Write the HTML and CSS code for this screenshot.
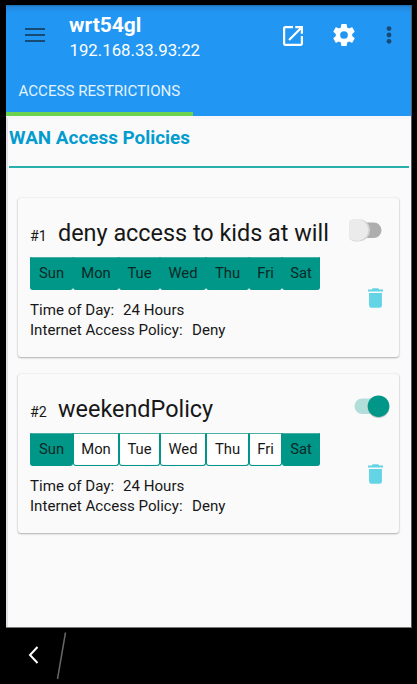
FILE: index.html
```html
<!DOCTYPE html>
<html lang="en">
<head>
<meta charset="utf-8">
<title>WAN Access Policies</title>
<link rel="stylesheet" href="styles.css">
</head>
<body>
<div class="screen">
  <header class="header">
    <div class="toolbar">
      <svg class="menu" viewBox="0 0 20 15"><path d="M0 1h20M0 7h20M0 13h20" stroke="#174a75" stroke-width="2"/></svg>
      <div class="titles">
        <h1 class="title">wrt54gl</h1>
        <div class="address">192.168.33.93:22</div>
      </div>
      <svg class="open" viewBox="3 3 18 18"><path fill="#fff" d="M19 19H5V5h7V3H5c-1.100 0-2 .9-2 2v14c0 1.100.9 2 2 2h14c1.100 0 2-.9 2-2v-7h-2v7zM14 3v2h3.590l-9.830 9.830 1.410 1.410L19 6.410V10h2V3h-7z"/></svg>
      <svg class="gear" viewBox="2 2 20 20"><path fill="#fff" d="M19.43 12.98c.04-.32.07-.64.07-.98s-.03-.66-.07-.98l2.110-1.650c.19-.15.24-.42.12-.64l-2-3.460c-.12-.22-.39-.3-.61-.22l-2.490 1c-.52-.4-1.080-.73-1.690-.98l-.38-2.650A.49.49 0 0 0 14 2h-4c-.25 0-.46.18-.49.42l-.38 2.650c-.61.25-1.170.59-1.690.98l-2.490-1c-.23-.09-.49 0-.61.22l-2 3.460c-.13.22-.07.49.12.64l2.110 1.650c-.04.32-.07.65-.07.98s.03.66.07.98l-2.110 1.650c-.19.15-.24.42-.12.64l2 3.460c.12.22.39.3.61.22l2.490-1c.52.4 1.080.73 1.690.98l.38 2.650c.03.24.24.42.49.42h4c.25 0 .46-.18.49-.42l.38-2.650c.61-.25 1.170-.59 1.690-.98l2.490 1c.23.09.49 0 .61-.22l2-3.460c.12-.22.07-.49-.12-.64l-2.110-1.650zM12 15.500a3.500 3.500 0 1 1 0-7 3.500 3.500 0 0 1 0 7z"/></svg>
      <svg class="more" viewBox="0 0 6 18"><g fill="#174a75"><circle cx="3" cy="2.600" r="2.400"/><circle cx="3" cy="9" r="2.400"/><circle cx="3" cy="15.300" r="2.400"/></g></svg>
    </div>
    <div class="tab">ACCESS RESTRICTIONS</div>
  </header>
  <main class="content">
    <h2 class="heading">WAN Access Policies</h2>
    <section class="card">
      <div class="top">
        <span class="num">#1</span><span class="name">deny access to kids at will</span>
        <svg class="switch" viewBox="0 0 40 28"><rect x="8" y="6.500" width="25.500" height="15.500" rx="7.750" fill="#aeaeae"/><path d="M1.500 5C5 3 9 2.500 11 3.300a11 11 0 0 1 0 22C9 26 5 25.500 1.500 23z" fill="#d4d4d4"/><path d="M1.500 5C5 3 9 2.500 11 3.300a10.800 10.800 0 0 1 0 21.400C9 25 5 24.500 1.500 23z" fill="#ebebeb"/></svg>
      </div>
      <div class="days"><span class="day on">Sun</span><span class="day on">Mon</span><span class="day on">Tue</span><span class="day on">Wed</span><span class="day on">Thu</span><span class="day on">Fri</span><span class="day on">Sat</span></div>
      <div class="bottom">
        <div class="details"><p><span class="time">Time of Day:</span><span class="hours">24 Hours</span></p><p><span class="policy">Internet Access Policy:</span><span class="deny">Deny</span></p></div>
        <svg class="trash" viewBox="5 3 14 18"><path fill="#62d4e5" d="M6 19c0 1.100.9 2 2 2h8c1.100 0 2-.9 2-2V7.400H6V19zM19 4h-3.500l-1-1h-5l-1 1H5v2h14V4z"/></svg>
      </div>
    </section>
    <section class="card">
      <div class="top">
        <span class="num">#2</span><span class="name">weekendPolicy</span>
        <svg class="switch" viewBox="0 0 40 28"><rect x="6.500" y="6.500" width="28" height="15.500" rx="7.750" fill="#b1ded9"/><circle cx="30.500" cy="15" r="11" fill="#bcc7c5"/><circle cx="30.500" cy="14.200" r="10.800" fill="#009688"/></svg>
      </div>
      <div class="days"><span class="day on">Sun</span><span class="day">Mon</span><span class="day">Tue</span><span class="day">Wed</span><span class="day">Thu</span><span class="day">Fri</span><span class="day on">Sat</span></div>
      <div class="bottom">
        <div class="details"><p><span class="time">Time of Day:</span><span class="hours">24 Hours</span></p><p><span class="policy">Internet Access Policy:</span><span class="deny">Deny</span></p></div>
        <svg class="trash" viewBox="5 3 14 18"><path fill="#62d4e5" d="M6 19c0 1.100.9 2 2 2h8c1.100 0 2-.9 2-2V7.400H6V19zM19 4h-3.500l-1-1h-5l-1 1H5v2h14V4z"/></svg>
      </div>
    </section>
  </main>
</div>
<nav class="nav">
  <svg class="back" viewBox="0 0 10 18"><path d="M9.500 1L2 9 9.500 17" fill="none" stroke="#fff" stroke-width="2"/></svg>
  <svg class="slash" viewBox="0 0 11 48"><path d="M9.500.5L1.500 47" stroke="#666" stroke-width="1.500"/></svg>
</nav>
</body>
</html>
```
FILE: styles.css
```css
* { box-sizing: border-box; }
body {
  margin: 0;
  width: 417px;
  height: 684px;
  padding-top: 5px;
  background: #000;
  font-family: Roboto, "Liberation Sans", sans-serif;
  color: #171717;
  overflow: hidden;
}
svg { display: block; flex: none; overflow: visible; }
h1, h2, p { margin: 0; }
.screen {
  width: 406px;
  height: 623px;
  margin-left: 6px;
  background: #fafafa;
  border-right: 1px solid #555a63;
  border-bottom: 1px solid #777;
}
.header {
  height: 111px;
  background: linear-gradient(#1d6eae 0, #2389de 2px, #2196f3 8px);
  color: #fff;
}
.toolbar { display: flex; height: 62px; padding-left: 19px; }
.menu { width: 20px; height: 15px; margin-top: 23px; }
.titles { flex: none; width: 231px; padding: 8px 0 0 24px; white-space: nowrap; }
.title { font-size: 21px; line-height: 25px; font-weight: 700; }
.address { font-size: 16.800px; line-height: 24px; padding-left: .5px; }
.open { width: 20px; height: 20px; margin: 21px 0 0 7px; }
.gear { width: 22px; height: 22px; margin: 19px 0 0 30px; }
.more { width: 6px; height: 18px; margin: 21px 0 0 30.500px; }
.tab {
  width: 187px;
  height: 49px;
  padding: 13px 0 0 12.500px;
  border-bottom: 4px solid #6dd24f;
  font-size: 15.100px;
  line-height: 22px;
  color: #e4f3ff;
  white-space: nowrap;
}
.content { height: 511px; padding: 0 3px; border-left: 2px solid #e1dfe6; border-top: 3px solid #f5f5fa; }
.heading {
  height: 49px;
  padding: 7px 0 0;
  border-bottom: 2px solid #27b0ac;
  margin: 0 -1px 30px -2px;
  font-size: 18.900px;
  line-height: 24px;
  color: #049ccf;
}
.card {
  width: 381px;
  height: 159px;
  margin: 0 0 17px 7px;
  padding: 18px 12px 0;
  border-radius: 3px;
  background: #fafafa;
  box-shadow: 0 1px 2px rgba(0,0,0,.28), 0 0 2px rgba(0,0,0,.12);
}
.top { display: flex; height: 41px; align-items: baseline; white-space: nowrap; line-height: 34px; }
.num { width: 28px; font-size: 14.200px; flex: none; margin-bottom: 1px; }
.name { width: 290px; font-size: 23.400px; flex: none; }
.switch { width: 40px; height: 28px; align-self: flex-start; }
.days { display: grid; grid-template-columns: 43px 46px 41px 46px 43px 33px 38px; width: 290px; height: 31px; background: #fff; }
.day { text-align: center; font-size: 14.800px; line-height: 31px; border: 1px solid #009688; border-top-color: #48b0a6; border-radius: 0 0 3px 3px; }
.on { background: #009688; color: #0a2925; }
.bottom { display: flex; justify-content: space-between; padding-right: 4px; }
.details { padding-top: 12px; font-size: 15.100px; line-height: 20px; white-space: nowrap; }
.details p { display: flex; }
.time { width: 93px; }
.policy { width: 162px; }
.trash { width: 15px; height: 20px; }
.nav { display: flex; padding-left: 28px; height: 56px; }
.back { width: 10px; height: 18px; margin-top: 18px; }
.slash { width: 11px; height: 48px; margin: 4px 0 0 18px; }
```
